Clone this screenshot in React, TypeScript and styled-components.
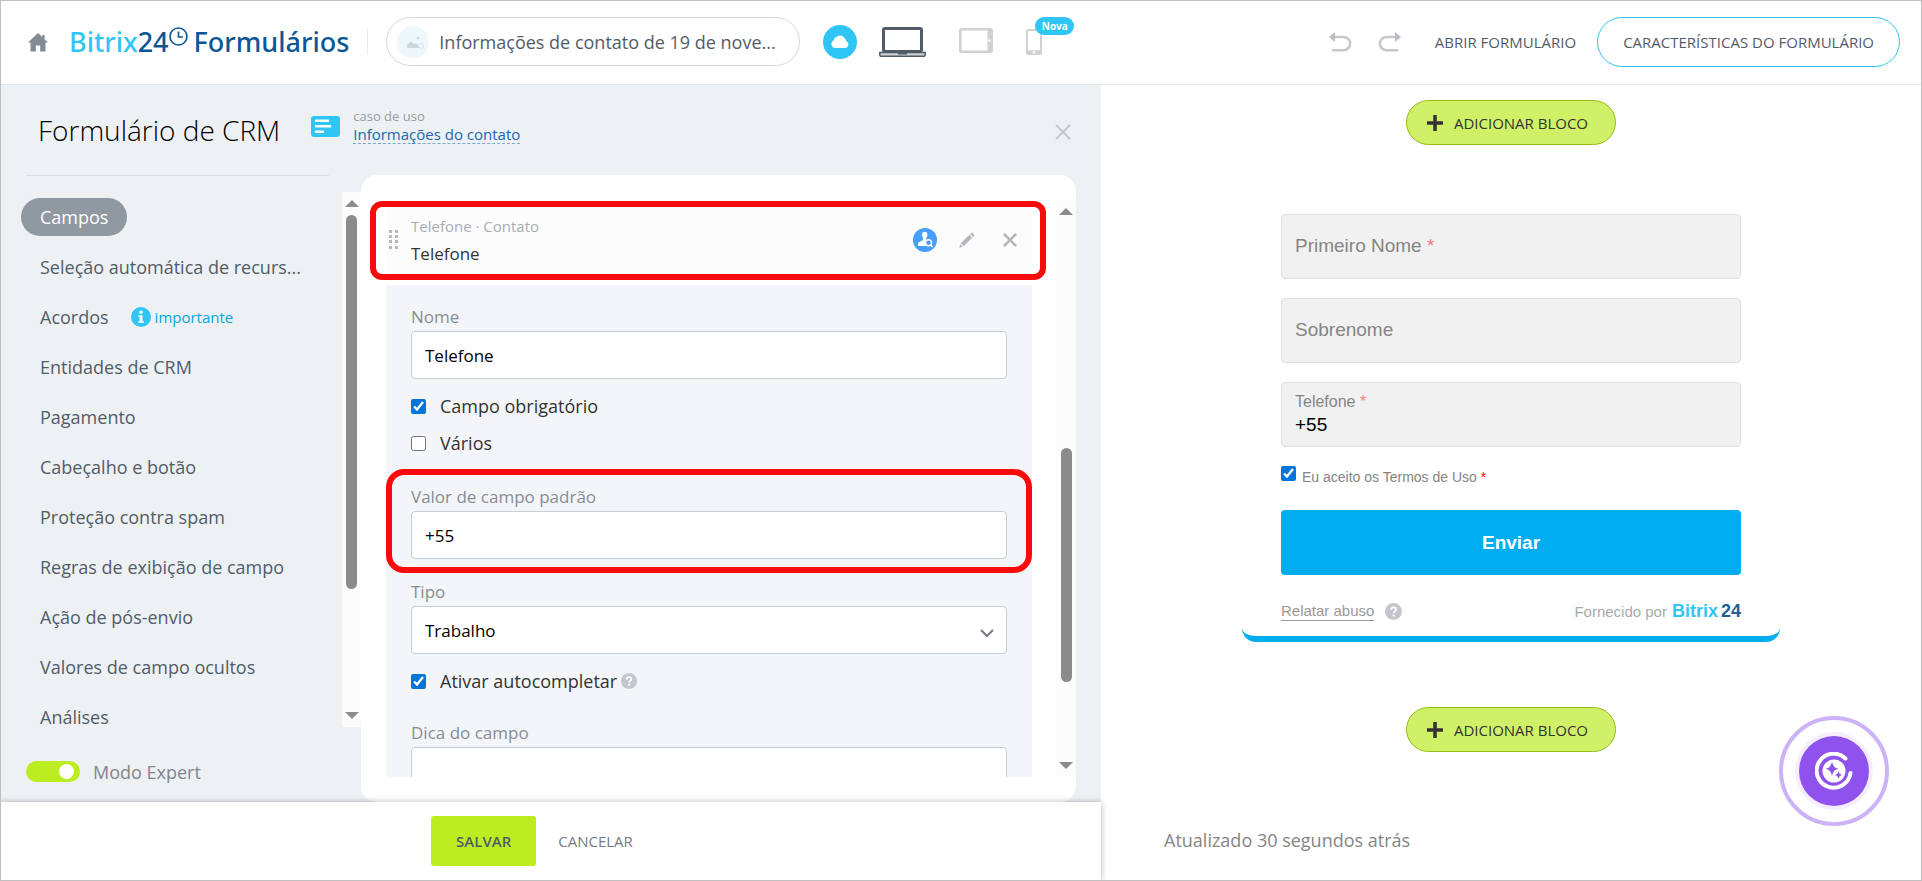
import React, { useState } from 'react';
import styled, { createGlobalStyle, css } from 'styled-components';

const ui = '"Segoe UI", "Open Sans", "Noto Sans", sans-serif';
const arial = 'Arial, "Liberation Sans", sans-serif';

const GlobalStyle = createGlobalStyle`
  *, *::before, *::after { box-sizing: border-box; }
  body { margin: 0; background: #fff; font-family: ${ui}; font-size: 18px; color: #333; }
  button, input, select { font: inherit; color: inherit; margin: 0; }
  button { background: none; border: 0; padding: 0; cursor: pointer; }
  svg { display: block; flex: none; }
`;

/* ---------- shell ---------- */

const Shell = styled.div`
  display: flex;
  flex-direction: column;
  height: 100vh;
  min-height: 640px;
  border: 1px solid #bfbfbf;
  overflow: hidden;
`;

const Workspace = styled.div`
  flex: 1;
  min-height: 0;
  display: grid;
  grid-template-columns: 110fr 82fr;
`;

/* ---------- header ---------- */

const Header = styled.header`
  display: flex;
  align-items: center;
  height: 84px;
  padding: 0 21px 2px 26px;
  border-bottom: 1px solid #e3e6e9;
  color: #525c69;
`;

const HomeLink = styled.a`
  color: #828b95;
  margin: 2px 21px 0 1px;
`;

const Logo = styled.div`
  display: flex;
  align-items: center;
  font: 500 27px/36px "Noto Sans", sans-serif;
  color: #0b5796;
  svg { margin: 0 6px 10px 0; }
`;

const LogoName = styled.span`
  color: #2fc6f6;
`;

const Separator = styled.span`
  width: 1px;
  height: 26px;
  margin: 0 18px;
  background: #e8eaec;
`;

const TitlePill = styled.button`
  display: flex;
  align-items: center;
  gap: 10px;
  width: 414px;
  height: 49px;
  padding: 0 10px;
  border: 1px solid #d5d7db;
  border-radius: 25px;
  color: #525c69;
  white-space: nowrap;
`;

const Devices = styled.div`
  display: flex;
  align-items: center;
  gap: 33px;
  margin-left: 22px;
`;

const CloudBadge = styled.span`
  display: grid;
  place-items: center;
  width: 34px;
  height: 34px;
  margin-left: 23px;
  border-radius: 50%;
  background: #2fc6f6;
`;

const DeviceButton = styled.button`
  position: relative;
`;

const NewBadge = styled.span`
  position: absolute;
  left: 9px;
  bottom: 20px;
  width: 39px;
  height: 18px;
  border-radius: 9px;
  background: #2fc6f6;
  color: #fff;
  font: 700 10px/18px "Open Sans", sans-serif;
  text-align: center;
`;

const HeaderActions = styled.div`
  display: flex;
  align-items: center;
  margin-left: auto;
  font-size: 15px;
`;

const HistoryButton = styled.button`
  width: 23px;
  margin-right: 26px;
`;

const TextButton = styled.button`
  margin: 0 21px 0 8px;
  color: #525c69;
  font-size: 15px;
`;

const OutlineButton = styled.button`
  height: 50px;
  padding: 0 25px;
  border: 1px solid #2fc6f6;
  border-radius: 25px;
  color: #525c69;
  font-size: 15px;
`;

/* ---------- editor ---------- */

const Editor = styled.section`
  display: flex;
  flex-direction: column;
  min-width: 0;
  min-height: 0;
  background: #edf1f4;
`;

const EditorHead = styled.div`
  display: flex;
  align-items: flex-start;
  height: 90px;
  padding: 22px 30px 0 37px;
`;

const EditorTitle = styled.h1`
  margin: 0 31px 0 0;
  font-size: 28px;
  font-weight: 300;
  line-height: 46px;
  color: #000;
`;

const UseCaseIcon = styled.svg`
  margin: 9px 13px 0 0;
`;

const UseCase = styled.div`
  flex: 1;
  font-size: 13px;
  line-height: 18px;
  color: #959ca4;
`;

const UseCaseLink = styled.a`
  display: block;
  width: fit-content;
  font-size: 15px;
  line-height: 18px;
  color: #2067b0;
  text-decoration: none;
  border-bottom: 1px dashed #7aa6d2;
`;

const CloseButton = styled.button`
  margin-top: 17px;
`;

const EditorBody = styled.div`
  flex: 1;
  min-height: 0;
  display: flex;
`;

const Sidebar = styled.aside`
  width: 360px;
  flex: none;
  display: flex;
  flex-direction: column;
`;

const Rule = styled.hr`
  width: 303px;
  margin: 0 0 16px 25px;
  border: 0;
  border-top: 1px solid #dadfe3;
`;

const MenuArea = styled.div`
  flex: 1;
  min-height: 0;
  display: flex;
`;

const Menu = styled.nav`
  flex: 1;
  min-width: 0;
  display: flex;
  flex-direction: column;
  align-items: flex-start;
  gap: 12px;
  padding: 6px 0 0 20px;
`;

const MenuItem = styled.a<{ $active?: boolean }>`
  flex: none;
  display: flex;
  align-items: center;
  height: 38px;
  padding: 0 19px;
  border-radius: 19px;
  text-decoration: none;
  white-space: nowrap;
  color: ${p => (p.$active ? '#fff' : '#525c69')};
  background: ${p => (p.$active ? '#9098a2' : 'transparent')};
`;

const Important = styled.span`
  display: flex;
  align-items: center;
  gap: 4px;
  margin-left: 22px;
  font-size: 15px;
  color: #05a6e2;
`;

const ExpertRow = styled.label`
  display: flex;
  align-items: center;
  gap: 13px;
  height: 75px;
  padding: 14px 0 0 25px;
  color: #80868e;
`;

const Toggle = styled.input`
  appearance: none;
  width: 54px;
  height: 21px;
  border-radius: 11px;
  background: #d5d9de;
  &:checked { background: #bbed21; }
  &::before {
    content: '';
    display: block;
    width: 15px;
    height: 15px;
    margin: 3px 6px;
    border-radius: 50%;
    background: #fff;
  }
  &:checked::before { margin-left: 33px; }
`;

const Bar = styled.div<{ $width: number }>`
  display: flex;
  flex-direction: column;
  align-items: center;
  flex: none;
  width: ${p => p.$width}px;
  padding: 8px 0;
  background: #fcfcfc;
`;

const Track = styled.div`
  flex: 1;
  width: 11px;
  margin: 8px 0;
  display: flex;
  flex-direction: column;
`;

const Gap = styled.div<{ $share: number }>`
  flex: ${p => p.$share} 0 0;
`;

const Thumb = styled.div<{ $share: number }>`
  flex: ${p => p.$share} 0 0;
  border-radius: 6px;
  background: #8b8b8b;
`;

const Sheet = styled.div`
  flex: 1;
  min-width: 0;
  display: flex;
  margin-right: 25px;
  padding: 25px 0;
  border-radius: 16px;
  background: #fff;
`;

const SheetScroll = styled.div`
  flex: 1;
  min-width: 0;
  padding: 1px 24px 0 25px;
  overflow: hidden;
`;

const FieldCard = styled.div`
  position: relative;
  display: flex;
  align-items: center;
  height: 79px;
  padding: 0 15px 2px 3px;
  background: #fcfcfd;
  &::after {
    content: '';
    position: absolute;
    inset: 0 -14px 0 -16px;
    border: 6px solid #f90b0b;
    border-radius: 12px;
    pointer-events: none;
  }
`;

const FieldCardText = styled.div`
  flex: 1;
  margin-left: 13px;
  font-size: 17px;
  line-height: 28px;
  color: #333;
  small { display: block; font-size: 15px; color: #a8adb4; }
`;

const CardActions = styled.div`
  display: flex;
  align-items: center;
  gap: 22px;
`;

const RemoveButton = styled.button`
  margin-left: 6px;
`;

const Settings = styled.form`
  margin-top: 5px;
  padding: 20px 25px;
  background: #f4f5f8;
`;

const Label = styled.label`
  display: block;
  margin-bottom: 2px;
  font-size: 17px;
  line-height: 24px;
  color: #868d95;
`;

const box = css`
  display: block;
  width: 100%;
  height: 48px;
  padding: 0 13px;
  border: 1px solid #c6cdd3;
  border-radius: 4px;
  background: #fff;
  color: #000;
  font-size: 17px;
`;

const TextInput = styled.input`${box}`;

const Select = styled.select`
  ${box}
  appearance: none;
`;

const SelectWrap = styled.div`
  position: relative;
  svg { position: absolute; right: 13px; top: 23px; pointer-events: none; }
`;

const CheckRow = styled.div<{ $top: number }>`
  display: flex;
  align-items: center;
  margin-top: ${p => p.$top}px;
  line-height: 24px;
  color: #333;
  label { margin: 0 4px 0 14px; }
`;

const Check = styled.input`
  width: 15px;
  height: 15px;
  accent-color: #0075d9;
`;

const Highlight = styled.div`
  margin: 14px -25px 7px;
  padding: 10px 19px 8px;
  border: 6px solid #f90b0b;
  border-radius: 18px;
`;

const HintGroup = styled.div`
  margin-top: 28px;
`;

const EditorFoot = styled.footer`
  z-index: 1;
  display: flex;
  align-items: center;
  justify-content: center;
  height: 78px;
  padding-right: 38px;
  background: #fff;
  box-shadow: 0 0 6px rgba(0, 0, 0, 0.3);
`;

const SaveButton = styled.button`
  width: 105px;
  height: 50px;
  border-radius: 3px;
  background: #bbed21;
  color: #535c69;
  font-size: 15px;
  font-weight: 600;
`;

const CancelButton = styled.button`
  margin-left: 22px;
  color: #737b85;
  font-size: 15px;
`;

/* ---------- preview ---------- */

const Preview = styled.section`
  display: flex;
  flex-direction: column;
  align-items: center;
  min-width: 0;
  padding: 15px 0 28px;
  background: #fff;
`;

const AddButton = styled.button`
  flex: none;
  display: flex;
  align-items: center;
  justify-content: center;
  gap: 11px;
  width: 210px;
  height: 45px;
  padding-right: 7px;
  border: 1px solid #95bd16;
  border-radius: 23px;
  background: #d0f167;
  color: #333;
  font-size: 15px;
`;

const FormCard = styled.form`
  width: 538px;
  max-width: 100%;
  margin: 69px 0 65px;
  padding: 0 39px 15px;
  border-bottom: 6px solid #00aeef;
  border-radius: 0 0 14px 14px;
  font-family: ${arial};
`;

const FormField = styled.div`
  display: grid;
  height: 65px;
  margin-bottom: 19px;
  border: 1px solid #e0e0e0;
  border-radius: 4px;
  background: #f1f1f1;
`;

const FormLabel = styled.label<{ $raised?: boolean }>`
  grid-area: 1 / 1;
  align-self: ${p => (p.$raised ? 'start' : 'center')};
  padding: ${p => (p.$raised ? '8px 13px' : '0 13px 2px')};
  font-size: ${p => (p.$raised ? 16 : 19)}px;
  line-height: 22px;
  color: #858585;
  pointer-events: none;
`;

const FormInput = styled.input`
  grid-area: 1 / 1;
  width: 100%;
  padding: 20px 13px 0;
  border: 0;
  background: none;
  color: #000;
  font-size: 19px;
`;

const Star = styled.span<{ $strong?: boolean }>`
  color: ${p => (p.$strong ? '#f00' : '#ff7b7b')};
`;

const Consent = styled.div`
  display: flex;
  align-items: flex-start;
  gap: 6px;
  height: 20px;
  margin: 18px 0 24px;
  font-size: 14px;
  line-height: 22px;
  color: #858585;
`;

const SubmitButton = styled.button`
  width: 100%;
  height: 65px;
  border-radius: 4px;
  background: #00aeef;
  color: #fff;
  font-size: 19px;
  font-weight: 700;
`;

const FormFoot = styled.div`
  display: flex;
  align-items: center;
  height: 20px;
  margin-top: 26px;
  font-size: 15px;
  line-height: 18px;
  color: #a5abb2;
  svg { margin-left: 11px; }
`;

const AbuseLink = styled.a`
  color: #999;
  text-decoration: none;
  border-bottom: 1px solid #999;
`;

const Powered = styled.span`
  margin-left: auto;
`;

const Brand = styled.b<{ $dark?: boolean }>`
  margin-left: ${p => (p.$dark ? 3 : 5)}px;
  font-size: 18px;
  color: ${p => (p.$dark ? '#215f98' : '#2fc6f6')};
`;

const Updated = styled.p`
  align-self: flex-start;
  margin: auto 0 0 63px;
  line-height: 24px;
  color: #858585;
`;

const BotButton = styled.button`
  position: fixed;
  right: 33px;
  bottom: 55px;
  display: grid;
  place-items: center;
  width: 110px;
  height: 110px;
  border: 4px solid #ccb3f8;
  border-radius: 50%;
`;

const BotCore = styled.span`
  display: grid;
  place-items: center;
  width: 70px;
  height: 70px;
  border-radius: 50%;
  background: #8f52ec;
  box-shadow: 0 0 0 4px #f4edfe;
`;

/* ---------- icons ---------- */

const Cross = ({ size, color, width = 2 }: { size: number; color: string; width?: number }) => (
  <svg width={size} height={size} viewBox="0 0 16 16" stroke={color} strokeWidth={width}>
    <path d="M1 1l14 14M15 1L1 15" />
  </svg>
);

const Question = ({ size, color }: { size: number; color: string }) => (
  <svg width={size} height={size} viewBox="0 0 16 16" fill="none">
    <circle cx="8" cy="8" r="8" fill={color} />
    <path d="M5.700 6.400c0-1.400 1-2.300 2.400-2.300s2.300.8 2.300 2c0 1.700-2.200 1.700-2.200 3.300" stroke="#fff" strokeWidth="1.700" />
    <circle cx="8.200" cy="11.700" r="1.100" fill="#fff" />
  </svg>
);

const Arrow = ({ down }: { down?: boolean }) => (
  <svg width="14" height="7" viewBox="0 0 14 7" fill="#8b8b8b">
    <path d={down ? 'M0 0h14L7 7z' : 'M0 7h14L7 0z'} />
  </svg>
);

const Undo = ({ flip }: { flip?: boolean }) => (
  <svg width="23" height="20" viewBox="0 0 23 20">
    <g transform={flip ? 'translate(23 0) scale(-1 1)' : undefined}>
      <path d="M5 5h9.500a6.600 6.600 0 0 1 0 13.200H3" fill="none" stroke="#c5c8cd" strokeWidth="2.600" />
      <path d="M0 5l6-5v10z" fill="#b9bdc3" />
    </g>
  </svg>
);

const Plus = () => (
  <svg width="16" height="16" viewBox="0 0 16 16" fill="#333">
    <path d="M6.200 0h3.600v6.200H16v3.600H9.800V16H6.200V9.800H0V6.200h6.200z" />
  </svg>
);

const Scrollbar = ({ width, before, thumb, after }: { width: number; before: number; thumb: number; after: number }) => (
  <Bar $width={width} aria-hidden>
    <Arrow />
    <Track>
      <Gap $share={before} />
      <Thumb $share={thumb} />
      <Gap $share={after} />
    </Track>
    <Arrow down />
  </Bar>
);

const AddBlock = () => (
  <AddButton type="button">
    <Plus />
    ADICIONAR BLOCO
  </AddButton>
);

const menu = [
  'Campos',
  'Seleção automática de recurs...',
  'Acordos',
  'Entidades de CRM',
  'Pagamento',
  'Cabeçalho e botão',
  'Proteção contra spam',
  'Regras de exibição de campo',
  'Ação de pós-envio',
  'Valores de campo ocultos',
  'Análises',
];

export default function App() {
  const [active, setActive] = useState('Campos');

  return (
    <>
      <GlobalStyle />
      <Shell>
        <Header>
          <HomeLink href="#" aria-label="Início">
            <svg width="20" height="19" viewBox="0 0 20 19" fill="currentColor">
              <path d="M10 0L0 9.500h2.500V18.500h5.300V12.500h4.400v6h5.300V9.500H20L16.600 6.200V2h-2.400v1.900z" />
            </svg>
          </HomeLink>
          <Logo>
            <LogoName>Bitrix</LogoName>24
            <svg width="19" height="19" viewBox="0 0 19 19" fill="none" stroke="#0b5796" strokeWidth="1.600">
              <circle cx="9.500" cy="9.500" r="8.500" />
              <path d="M9.500 4.500v5.500H14" />
            </svg>
            Formulários
          </Logo>
          <Separator />
          <TitlePill type="button">
            <svg width="32" height="32" viewBox="0 0 32 32">
              <circle cx="16" cy="16" r="16" fill="#eef7fb" />
              <path d="M10 22v-3l4-4 3 3 2-1 4 5z" fill="#ccd6dc" />
              <circle cx="21" cy="12" r="1.500" fill="#ccd6dc" />
              <circle cx="24" cy="20" r="2.500" fill="none" stroke="#dbe3e7" />
            </svg>
            Informações de contato de 19 de nove...
          </TitlePill>
          <CloudBadge>
            <svg width="18" height="13" viewBox="0 0 18 13" fill="#fff">
              <path d="M4.200 13A4.100 4.100 0 0 1 3 5.100 3.200 3.200 0 0 1 5.300 2.100 5 5 0 0 1 13.500 3.200a3.400 3.400 0 0 1 1.800 3A3.600 3.600 0 0 1 14.500 13z" />
            </svg>
          </CloudBadge>
          <Devices>
            <DeviceButton type="button" aria-label="Computador">
              <svg width="47" height="30" viewBox="0 0 47 30" fill="none" stroke="#525c69">
                <rect x="4.500" y="1.500" width="38" height="23" rx="1.500" strokeWidth="3" fill="#fff" />
                <path d="M.8 25.500h45.400V28q0 1.300-1.500 1.300H2.300Q.8 29.300.8 28z" fill="#cdd1d6" strokeWidth="1.500" />
                <path d="M19 26.500h9" strokeWidth="2" />
              </svg>
            </DeviceButton>
            <DeviceButton type="button" aria-label="Tablet">
              <svg width="34" height="28" viewBox="0 0 34 28" fill="none" stroke="#cfd1d5">
                <rect x="1.300" y="1.300" width="31.400" height="22.400" rx="1.500" strokeWidth="2.600" />
                <path d="M30.500 1v23" strokeWidth="4" />
                <circle cx="30.500" cy="12.500" r="1.200" fill="#fff" stroke="none" />
              </svg>
            </DeviceButton>
            <DeviceButton type="button" aria-label="Celular, nova">
              <svg width="16" height="26" viewBox="0 0 16 26" fill="none" stroke="#cfd1d5">
                <rect x="1" y="1" width="14" height="24" rx="1.500" strokeWidth="2" />
                <path d="M1 23.200h14" strokeWidth="4" />
                <circle cx="8" cy="23.300" r="1.200" fill="#fff" stroke="none" />
              </svg>
              <NewBadge>Nova</NewBadge>
            </DeviceButton>
          </Devices>
          <HeaderActions>
            <HistoryButton type="button" aria-label="Desfazer"><Undo /></HistoryButton>
            <HistoryButton type="button" aria-label="Refazer"><Undo flip /></HistoryButton>
            <TextButton type="button">ABRIR FORMULÁRIO</TextButton>
            <OutlineButton type="button">CARACTERÍSTICAS DO FORMULÁRIO</OutlineButton>
          </HeaderActions>
        </Header>

        <Workspace>
          <Editor>
            <EditorHead>
              <EditorTitle>Formulário de CRM</EditorTitle>
              <UseCaseIcon width="29" height="21" viewBox="0 0 29 21">
                <rect width="29" height="21" rx="3" fill="#2fc6f6" />
                <path d="M5 4.800h12M5 10.300h14M5 15.800h7" stroke="#fff" strokeWidth="2.600" strokeLinecap="round" />
              </UseCaseIcon>
              <UseCase>
                caso de uso
                <UseCaseLink href="#">Informações do contato</UseCaseLink>
              </UseCase>
              <CloseButton type="button" aria-label="Fechar">
                <Cross size={16} color="#c3c7cc" />
              </CloseButton>
            </EditorHead>

            <EditorBody>
              <Sidebar>
                <Rule />
                <MenuArea>
                  <Menu>
                    {menu.map(item => (
                      <MenuItem key={item} href="#" $active={item === active} onClick={() => setActive(item)}>
                        {item}
                        {item === 'Acordos' && (
                          <Important>
                            <svg width="20" height="20" viewBox="0 0 20 20">
                              <circle cx="10" cy="10" r="10" fill="#2fc6f6" />
                              <circle cx="10" cy="5.300" r="1.700" fill="#fff" />
                              <path d="M7.300 8.200h4.200v6.100h1.400v1.500H7.200v-1.500h1.400V9.700H7.300z" fill="#fff" />
                            </svg>
                            importante
                          </Important>
                        )}
                      </MenuItem>
                    ))}
                  </Menu>
                  <Scrollbar width={19} before={0} thumb={373} after={115} />
                </MenuArea>
                <ExpertRow>
                  <Toggle type="checkbox" role="switch" defaultChecked />
                  Modo Expert
                </ExpertRow>
              </Sidebar>

              <Sheet>
                <SheetScroll>
                  <FieldCard>
                    <svg width="9" height="19" viewBox="0 0 9 19" fill="#b6bac0">
                      {[0, 5, 10, 16].map(y => (
                        <path key={y} d={`M0 ${y}h3v3H0zM6 ${y}h3v3H6z`} />
                      ))}
                    </svg>
                    <FieldCardText>
                      <small>Telefone · Contato</small>
                      Telefone
                    </FieldCardText>
                    <CardActions>
                      <button type="button" aria-label="Contato">
                        <svg width="24" height="24" viewBox="0 0 24 24">
                          <circle cx="12" cy="12" r="12" fill="#459ffb" />
                          <path d="M9 6.800C9 4.800 10 3.800 11.700 3.800s2.700 1 2.700 3c0 1.500-.5 2.500-1.200 3.200v2l1.500.8a4 4 0 0 0-1.700 5.200H5v-1.900c0-1.200.8-2 2-2.500l3.200-1.500V10C9.500 9.300 9 8.300 9 6.800z" fill="#fff" />
                          <circle cx="15.500" cy="14.800" r="3" fill="#459ffb" stroke="#fff" strokeWidth="1.500" />
                          <path d="M17.500 17l2 2" stroke="#fff" strokeWidth="1.600" />
                        </svg>
                      </button>
                      <button type="button" aria-label="Editar">
                        <svg width="16" height="16" viewBox="0 0 16 16" fill="#b3b8bf">
                          <path d="M12.800 0.300L15.700 3.200 14 4.900 11.100 2zM10.300 2.800L13.200 5.700 4.700 14.200 1.800 11.300zM1.200 12.100L3.900 14.800.3 15.700z" />
                        </svg>
                      </button>
                      <RemoveButton type="button" aria-label="Remover">
                        <Cross size={14} color="#b3b8bf" width={3} />
                      </RemoveButton>
                    </CardActions>
                  </FieldCard>

                  <Settings>
                    <Label htmlFor="name">Nome</Label>
                    <TextInput id="name" defaultValue="Telefone" />
                    <CheckRow $top={15}>
                      <Check id="required" type="checkbox" defaultChecked />
                      <label htmlFor="required">Campo obrigatório</label>
                    </CheckRow>
                    <CheckRow $top={13}>
                      <Check id="multiple" type="checkbox" />
                      <label htmlFor="multiple">Vários</label>
                    </CheckRow>
                    <Highlight>
                      <Label htmlFor="default">Valor de campo padrão</Label>
                      <TextInput id="default" defaultValue="+55" />
                    </Highlight>
                    <Label htmlFor="type">Tipo</Label>
                    <SelectWrap>
                      <Select id="type" defaultValue="Trabalho">
                        <option>Trabalho</option>
                      </Select>
                      <svg width="14" height="9" viewBox="0 0 14 9" fill="none" stroke="#737b86" strokeWidth="2">
                        <path d="M1 1l6 6 6-6" />
                      </svg>
                    </SelectWrap>
                    <CheckRow $top={15}>
                      <Check id="autofill" type="checkbox" defaultChecked />
                      <label htmlFor="autofill">Ativar autocompletar</label>
                      <Question size={16} color="#c3c7d0" />
                    </CheckRow>
                    <HintGroup>
                      <Label htmlFor="hint">Dica do campo</Label>
                      <TextInput id="hint" />
                    </HintGroup>
                  </Settings>
                </SheetScroll>
                <Scrollbar width={20} before={225} thumb={233} after={72} />
              </Sheet>
            </EditorBody>

            <EditorFoot>
              <SaveButton type="button">SALVAR</SaveButton>
              <CancelButton type="button">CANCELAR</CancelButton>
            </EditorFoot>
          </Editor>

          <Preview>
            <AddBlock />
            <FormCard>
              <FormField>
                <FormLabel htmlFor="first">Primeiro Nome <Star>*</Star></FormLabel>
                <FormInput id="first" />
              </FormField>
              <FormField>
                <FormLabel htmlFor="last">Sobrenome</FormLabel>
                <FormInput id="last" />
              </FormField>
              <FormField>
                <FormLabel htmlFor="phone" $raised>Telefone <Star>*</Star></FormLabel>
                <FormInput id="phone" defaultValue="+55" />
              </FormField>
              <Consent>
                <Check id="terms" type="checkbox" defaultChecked />
                <label htmlFor="terms">Eu aceito os Termos de Uso <Star $strong>*</Star></label>
              </Consent>
              <SubmitButton type="button">Enviar</SubmitButton>
              <FormFoot>
                <AbuseLink href="#">Relatar abuso</AbuseLink>
                <Question size={17} color="#c3c6cb" />
                <Powered>
                  Fornecido por
                  <Brand>Bitrix</Brand>
                  <Brand $dark>24</Brand>
                </Powered>
              </FormFoot>
            </FormCard>
            <AddBlock />
            <Updated>Atualizado 30 segundos atrás</Updated>
          </Preview>
        </Workspace>

        <BotButton type="button" aria-label="Assistente">
          <BotCore>
            <svg width="38" height="38" viewBox="0 0 38 38" fill="none">
              <path d="M30.500 6.500A17 17 0 1 0 35.500 21" stroke="#fff" strokeWidth="4" strokeLinecap="round" />
              <circle cx="19" cy="19" r="11.500" fill="#fff" />
              <path d="M17 9.500q1 6.500 6.500 7.200-5.500.8-6.500 7.300-1-6.500-6.500-7.300Q16 16 17 9.500zM23.500 19q.6 3.500 3.700 4-3.100.5-3.700 4-.6-3.500-3.700-4 3.100-.5 3.700-4z" fill="#8f52ec" />
            </svg>
          </BotCore>
        </BotButton>
      </Shell>
    </>
  );
}
